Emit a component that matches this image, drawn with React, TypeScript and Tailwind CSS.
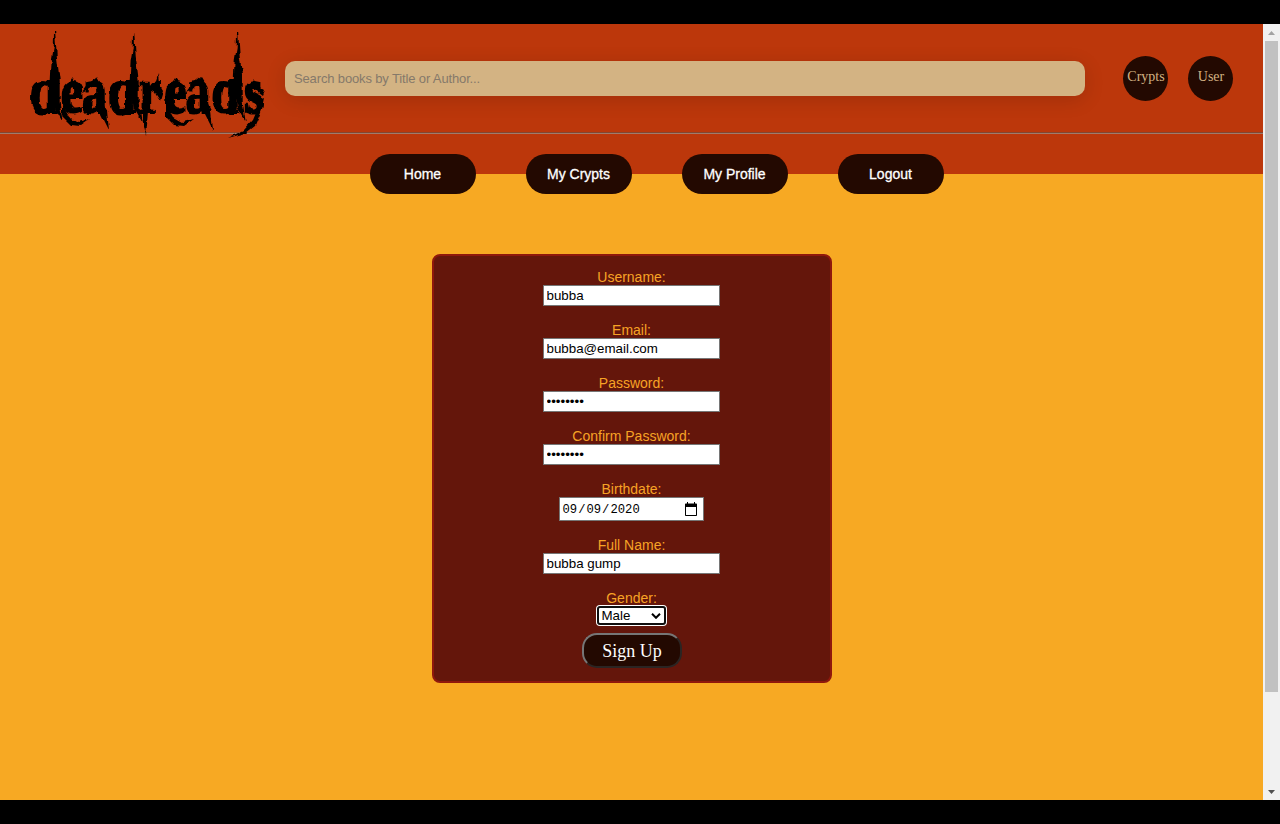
import React from "react";

function Logo() {
  return (
    <svg width="285" height="125" viewBox="0 24 285 125" className="relative block shrink-0" aria-label="deadreads">
      <defs>
        <filter id="rough" x="-5%" y="-5%" width="110%" height="110%">
          <feTurbulence type="fractalNoise" baseFrequency="0.11" numOctaves="2" seed="4" result="n" />
          <feDisplacementMap in="SourceGraphic" in2="n" scale="5" xChannelSelector="R" yChannelSelector="G" />
        </filter>
        <clipPath id="body">
          <rect x="0" y="80" width="285" height="60" />
        </clipPath>
      </defs>
      <g filter="url(#rough)" fill="#000">
        <g clipPath="url(#body)">
          <text
            transform="scale(0.76 1)"
            x="39 80 108 142 183 216 244 278 321"
            y="113"
            fontSize="66"
            fontWeight="700"
            stroke="#000"
            strokeWidth="2"
            style={{ fontFamily: '"Liberation Serif", serif' }}
          >
            deadreads
          </text>
        </g>
        {/* ascender spikes */}
        {[54, 133, 237].map((x) => (
          <path key={x} d={`M${x} 32l1.2 0 1.5 24 3 24 0 22 3 20-8-14-4-28 1-20 2-12z`} />
        ))}
        {/* peaks over the bowls */}
        <path d="M63 91l8-13 10 12-8-3z" />
        <path d="M167 91l8-13 10 12-8-3z" />
        <path d="M82 92l6-8 9-7 6 10-11 0z" />
        <path d="M186 92l6-8 9-7 6 10-11 0z" />
        <path d="M245 92l9-12 3 6 7 4-2 5-8-6z" />
        <path d="M153 90l5-16 1 10 4 7-3 10z" />
        {/* dripping tails */}
        <path d="M62 104l7 13 9 5 12-3-10 7-9-1-9-9z" />
        <path d="M166 104l7 13 9 5 12-3-10 7-9-1-9-9z" />
        <path d="M101 98l6 13 2 19-9-18z" />
        <path d="M205 98l6 13 2 19-9-18z" />
        <path d="M143 100l6 0-2 24-1 12-3-14z" />
        <path d="M259 100l5-2-3 14-6 14-9 7-18 5 16-8 9-10 5-12z" />
      </g>
    </svg>
  );
}

const inputCls =
  "block h-[21px] w-[177px] rounded-none border border-[#767676] bg-white px-[3px] text-[13.33px] leading-[17px] text-black outline-none";

function Field({ label, children }: { label: string; children: React.ReactNode }) {
  return (
    <label className="flex flex-col items-center">
      <span className="h-4 pl-px text-[14px] leading-4 text-[#f7a325]">{label}</span>
      {children}
    </label>
  );
}

function Scrollbar() {
  return (
    <div className="flex w-[17px] shrink-0 flex-col items-center bg-[#f1f1f1]">
      <div className="flex h-[17px] items-center">
        <svg width="7" height="4" viewBox="0 0 7 4"><path d="M0 4L3.5 0 7 4z" fill="#a3a3a3" /></svg>
      </div>
      <div className="h-[651px] w-[13px] bg-[#c1c1c1]" />
      <div className="mt-auto flex h-[17px] items-center">
        <svg width="7" height="4" viewBox="0 0 7 4"><path d="M0 0L3.5 4 7 0z" fill="#505050" /></svg>
      </div>
    </div>
  );
}

export default function App() {
  return (
    <div className="flex h-[824px] w-[1280px] overflow-hidden bg-black py-6 font-['Liberation_Sans',Arial,sans-serif]">
      <div className="flex w-[1263px] shrink-0 flex-col bg-[#f7a923]">
        <header className="h-[150px] shrink-0 bg-[#bc370b]">
          <div className="flex h-[110px] items-start border-b border-[#a07b6c] shadow-[inset_0_-1px_0_#85452e]">
            <Logo />
            <input
              placeholder="Search books by Title or Author..."
              className="mt-[37px] block h-[35px] w-[800px] shrink-0 rounded-[10px] bg-[#d3b383] px-[9px] text-[13px] tracking-[-0.14px] text-black shadow-[0_4px_20px_rgba(0,0,0,0.14)] outline-none placeholder:text-[#85796a]"
            />
            <div className="mt-8 ml-[38px] flex gap-5 font-['Liberation_Serif',serif] text-[14px] text-[#d3b383]">
              {["Crypts", "User"].map((t) => (
                <button key={t} className="flex h-[45px] w-[45px] justify-center rounded-full bg-[#230901] pt-[13px] pl-px leading-4">
                  {t}
                </button>
              ))}
            </div>
          </div>
          <nav className="mt-5 ml-[370px] flex gap-[50px]">
            {["Home", "My Crypts", "My Profile", "Logout"].map((t) => (
              <button
                key={t}
                className="h-10 w-[106px] rounded-[20px] bg-[#230901] pr-px text-[14px] text-white [-webkit-text-stroke:0.3px_white]"
              >
                {t}
              </button>
            ))}
          </nav>
        </header>

        <form className="mt-20 ml-[432px] flex h-[429px] w-[400px] flex-col items-center rounded-[8px] border-2 border-[#8f180c] bg-[#64160b] pt-[13px]">
          <div className="mr-[2px] flex flex-col gap-4">
            <Field label="Username:"><input className={inputCls} defaultValue="bubba" /></Field>
            <Field label="Email:"><input className={inputCls} defaultValue="bubba@email.com" /></Field>
            <Field label="Password:"><input type="password" className={inputCls} defaultValue="password" /></Field>
            <Field label="Confirm Password:"><input type="password" className={inputCls} defaultValue="password" /></Field>
            <Field label="Birthdate:">
              <div className="flex h-6 w-[145px] items-center border border-[#767676] bg-white pr-[5px] pl-[2px] font-['Liberation_Mono',monospace] text-[12.2px] text-black">
                <div className="flex pt-[2px]">
                  <span className="px-px">09</span>
                  <span>/</span>
                  <span className="px-px">09</span>
                  <span>/</span>
                  <span className="px-px">2020</span>
                </div>
                <svg className="ml-auto" width="14" height="15" viewBox="0 0 14 15">
                  <path
                    fillRule="evenodd"
                    fill="#000"
                    d="M3 0h1v1.5h6V0h1v1.5H12.2Q13 1.5 13 2.3V13.2Q13 14 12.2 14H1.8Q1 14 1 13.2V2.3Q1 1.5 1.8 1.5H3zM2 5v8h10V5z"
                  />
                </svg>
              </div>
            </Field>
            <Field label="Full Name:"><input className={inputCls} defaultValue="bubba gump" /></Field>
            <Field label="Gender:">
              <div className="flex h-[19px] w-[69px] items-center justify-between rounded-[3px] border-2 border-[#101010] bg-white px-[3px] text-[13.33px] leading-[15px] text-black ring-1 ring-white">
                Male
                <svg width="10" height="6" viewBox="0 0 10 6" fill="none">
                  <path d="M1 .8L5 4.8 9 .8" stroke="#000" strokeWidth="2" />
                </svg>
              </div>
            </Field>
          </div>
          <button
            type="button"
            className="mt-2 h-[35px] w-[100px] rounded-[15px] border-2 border-t-[#767676] border-r-[#2b2523] border-b-[#2b2523] border-l-[#767676] bg-[#230901] font-['Liberation_Serif',serif] text-[18px] leading-[20px] text-white"
          >
            Sign Up
          </button>
        </form>
      </div>
      <Scrollbar />
    </div>
  );
}
